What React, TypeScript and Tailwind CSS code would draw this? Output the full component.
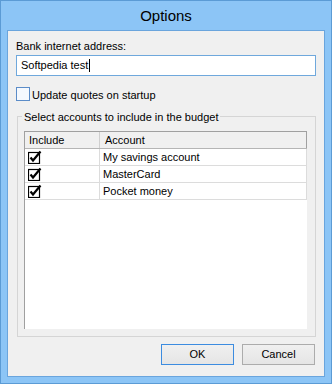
import React from "react";

const font = { fontFamily: '"Liberation Sans", Arial, sans-serif' };

interface RowProps {
  label: string;
}

function CheckGlyph() {
  return (
    <svg width="14" height="14" viewBox="0 0 14 14" className="block">
      <rect x="0.5" y="2.5" width="11" height="11" fill="white" stroke="black" strokeWidth="1.2" />
      <path d="M2.5 7.5 L5 10.5 L12.5 1.5" fill="none" stroke="black" strokeWidth="2.2" strokeLinejoin="miter" />
    </svg>
  );
}

function AccountRow({ label }: RowProps) {
  return (
    <div className="flex h-[17px] border-b border-[#dcdcdc]">
      <div className="flex w-[75px] items-start border-r border-[#dcdcdc] pl-[3px] pt-[1px]">
        <CheckGlyph />
      </div>
      <div className="flex-1 border-r border-[#dcdcdc] pl-[3px] text-[11px] leading-[16px] text-black">{label}</div>
    </div>
  );
}

export default function App() {
  const accounts = ["My savings account", "MasterCard", "Pocket money"];
  return (
    <div style={font} className="h-[384px] w-[332px] border border-[#5b9bd5] bg-[#8cc5f6] px-[6px] pb-[6px]">
      <div className="flex h-[29px] items-start justify-center pt-[4px] text-[15px] leading-[22px] text-black">Options</div>
      <div className="relative h-[347px] border border-[#6aa5dd] bg-[#f0f0f0] px-[8px] text-[11px] text-black">
        <div className="mt-[8px] leading-[15px]">Bank internet address:</div>
        <div className="mt-[1px] flex h-[21px] items-center border border-[#6fa8dc] bg-white pl-[4px] leading-[15px]">
          <span>Softpedia test</span>
          <span className="ml-[1px] inline-block h-[13px] w-px bg-black" />
        </div>
        <div className="mt-[11px] flex h-[15px] items-start">
          <span className="h-[14px] w-[14px] border border-[#5b8cc8] bg-[#f5f9fe]" />
          <span className="ml-[2px] mt-[1px] leading-[15px]">Update quotes on startup</span>
        </div>
        <div className="relative ml-[1px] mt-[14px] h-[221px] border border-[#d5d5d5] pl-[6px] pr-[8px] pt-[14px]">
          <span className="absolute left-[4px] top-[-7px] bg-[#f0f0f0] px-[2px] leading-[15px]">
            Select accounts to include in the budget
          </span>
          <div className="h-[198px] border-l border-t border-[#a0a0a0] bg-white">
            <div className="flex h-[17px] border-b border-[#b5b5b5] bg-[#f0f0f0] leading-[16px]">
              <div className="w-[75px] border-r border-[#cfcfcf] pl-[4px]">Include</div>
              <div className="flex-1 border-r border-[#a0a0a0] pl-[5px]">Account</div>
            </div>
            {accounts.map((a) => (
              <AccountRow key={a} label={a} />
            ))}
          </div>
        </div>
        <div className="mt-[7px] flex justify-end gap-[8px] pr-[1px]">
          <button className="h-[21px] w-[73px] border border-[#3c8ce0] bg-gradient-to-b from-[#f0f0f0] to-[#e5e5e5] text-[11px] leading-[19px] text-black">
            OK
          </button>
          <button className="h-[21px] w-[73px] border border-[#acacac] bg-gradient-to-b from-[#f0f0f0] to-[#e5e5e5] text-[11px] leading-[19px] text-black">
            Cancel
          </button>
        </div>
      </div>
    </div>
  );
}
